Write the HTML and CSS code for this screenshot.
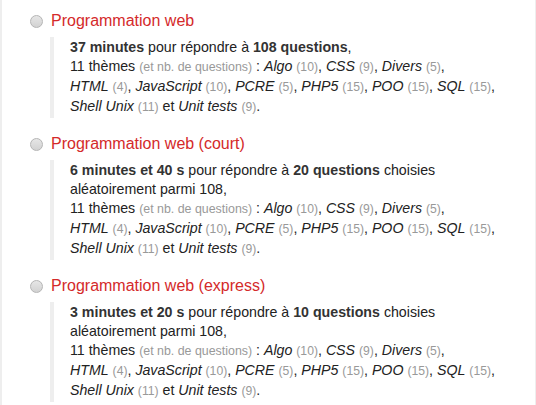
FILE: index.html
```html
<!DOCTYPE html>
<html lang="fr">
<head>
<meta charset="utf-8">
<link rel="stylesheet" href="styles.css">
</head>
<body>
<div class="page">
  <ul class="quiz-list">
    <li class="quiz">
      <div class="quiz-head"><span class="radio"></span><span class="quiz-title">Programmation web</span></div>
      <div class="quiz-desc">
        <b>37 minutes</b> pour répondre à <b>108 questions</b>,<br>
        11 thèmes <span class="note">(et nb. de questions)</span> : <i>Algo</i> <span class="n">(10)</span>, <i>CSS</i> <span class="n">(9)</span>, <i>Divers</i> <span class="n">(5)</span>,<br>
        <i>HTML</i> <span class="n">(4)</span>, <i>JavaScript</i> <span class="n">(10)</span>, <i>PCRE</i> <span class="n">(5)</span>, <i>PHP5</i> <span class="n">(15)</span>, <i>POO</i> <span class="n">(15)</span>, <i>SQL</i> <span class="n">(15)</span>,<br>
        <i>Shell Unix</i> <span class="n">(11)</span> et <i>Unit tests</i> <span class="n">(9)</span>.
      </div>
    </li>
    <li class="quiz">
      <div class="quiz-head"><span class="radio"></span><span class="quiz-title">Programmation web (court)</span></div>
      <div class="quiz-desc">
        <b>6 minutes et 40 s</b> pour répondre à <b>20 questions</b> choisies<br>
        aléatoirement parmi 108,<br>
        11 thèmes <span class="note">(et nb. de questions)</span> : <i>Algo</i> <span class="n">(10)</span>, <i>CSS</i> <span class="n">(9)</span>, <i>Divers</i> <span class="n">(5)</span>,<br>
        <i>HTML</i> <span class="n">(4)</span>, <i>JavaScript</i> <span class="n">(10)</span>, <i>PCRE</i> <span class="n">(5)</span>, <i>PHP5</i> <span class="n">(15)</span>, <i>POO</i> <span class="n">(15)</span>, <i>SQL</i> <span class="n">(15)</span>,<br>
        <i>Shell Unix</i> <span class="n">(11)</span> et <i>Unit tests</i> <span class="n">(9)</span>.
      </div>
    </li>
    <li class="quiz">
      <div class="quiz-head"><span class="radio"></span><span class="quiz-title">Programmation web (express)</span></div>
      <div class="quiz-desc">
        <b>3 minutes et 20 s</b> pour répondre à <b>10 questions</b> choisies<br>
        aléatoirement parmi 108,<br>
        11 thèmes <span class="note">(et nb. de questions)</span> : <i>Algo</i> <span class="n">(10)</span>, <i>CSS</i> <span class="n">(9)</span>, <i>Divers</i> <span class="n">(5)</span>,<br>
        <i>HTML</i> <span class="n">(4)</span>, <i>JavaScript</i> <span class="n">(10)</span>, <i>PCRE</i> <span class="n">(5)</span>, <i>PHP5</i> <span class="n">(15)</span>, <i>POO</i> <span class="n">(15)</span>, <i>SQL</i> <span class="n">(15)</span>,<br>
        <i>Shell Unix</i> <span class="n">(11)</span> et <i>Unit tests</i> <span class="n">(9)</span>.
      </div>
    </li>
  </ul>
</div>
</body>
</html>
```
FILE: styles.css
```css
html, body {
  margin: 0;
  padding: 0;
  background: #fff;
}
.page {
  width: 533px;
  height: 405px;
  border-left: 2px solid #eeeeee;
  border-right: 1px solid #eeeeee;
  font-family: "Liberation Sans", Arial, sans-serif;
  color: #222;
  overflow: hidden;
}
.quiz-list {
  list-style: none;
  margin: 0;
  padding: 10px 0 0 28px;
}
.quiz {
  margin: 0 0 15px 0;
}
.quiz-head {
  display: flex;
  align-items: center;
  gap: 8px;
  height: 22px;
}
.radio {
  width: 11px;
  height: 11px;
  border: 1px solid #b5b5b5;
  border-radius: 50%;
  background: linear-gradient(#e6e6e6, #d2d2d2);
  box-sizing: content-box;
}
.quiz-title {
  color: #d42a2a;
  font-size: 16px;
}
.quiz-desc {
  margin: 5px 0 0 20px;
  border-left: 4px solid #eeeeee;
  padding: 1px 0 1px 16px;
  font-size: 14.2px;
  line-height: 19px;
  color: #222;
}
.quiz-desc b {
  color: #333;
}
.note {
  font-size: 12.4px;
  color: #999;
}
.n {
  font-size: 12.2px;
  color: #999;
}
```
